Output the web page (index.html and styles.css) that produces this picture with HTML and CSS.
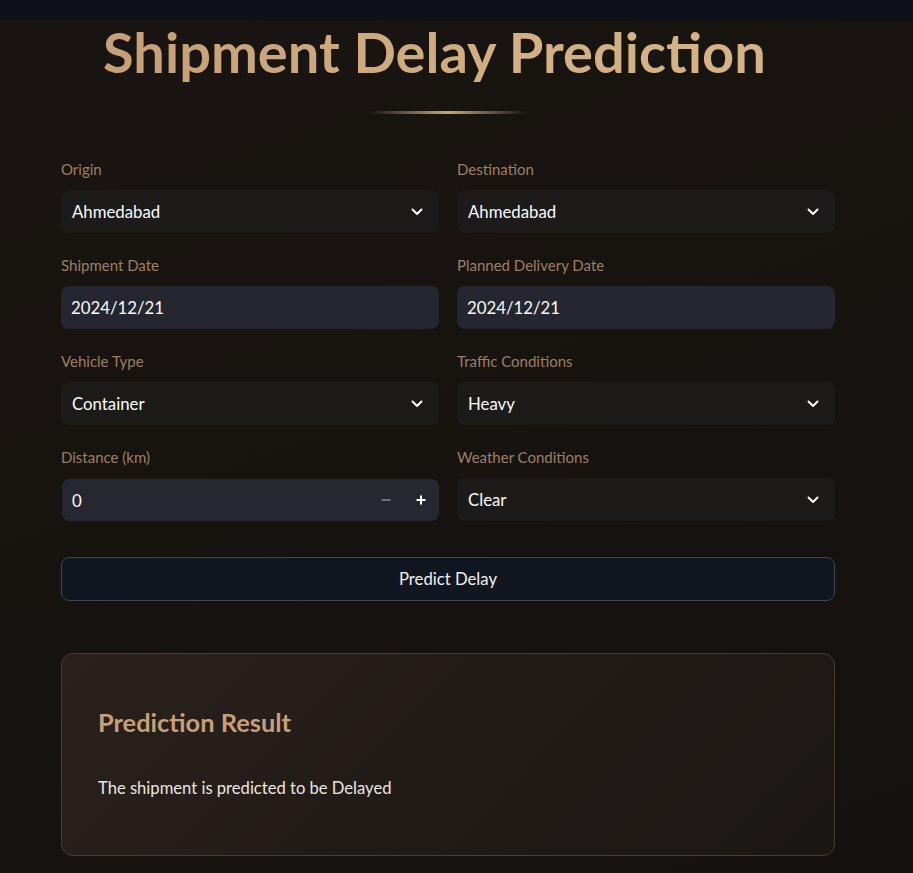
FILE: index.html
```html
<!DOCTYPE html>
<html lang="en">
<head>
<meta charset="utf-8">
<title>Shipment Delay Prediction</title>
<link rel="stylesheet" href="styles.css">
</head>
<body>
<header class="topbar"></header>
<main class="container">
  <h1 class="title">Shipment Delay Prediction</h1>
  <div class="divider"></div>

  <form class="form-grid">
    <div class="field">
      <label class="label">Origin</label>
      <div class="control select"><span>Ahmedabad</span>
        <svg class="chev" viewBox="0 0 12 8" width="12" height="8"><path d="M1.5 1.5 6 6l4.5-4.5" fill="none" stroke="#fff" stroke-width="2" stroke-linecap="round" stroke-linejoin="round"/></svg>
      </div>
    </div>
    <div class="field">
      <label class="label">Destination</label>
      <div class="control select"><span>Ahmedabad</span>
        <svg class="chev" viewBox="0 0 12 8" width="12" height="8"><path d="M1.5 1.5 6 6l4.5-4.5" fill="none" stroke="#fff" stroke-width="2" stroke-linecap="round" stroke-linejoin="round"/></svg>
      </div>
    </div>
    <div class="field">
      <label class="label">Shipment Date</label>
      <div class="control input"><span>2024/12/21</span></div>
    </div>
    <div class="field">
      <label class="label">Planned Delivery Date</label>
      <div class="control input"><span>2024/12/21</span></div>
    </div>
    <div class="field">
      <label class="label">Vehicle Type</label>
      <div class="control select"><span>Container</span>
        <svg class="chev" viewBox="0 0 12 8" width="12" height="8"><path d="M1.5 1.5 6 6l4.5-4.5" fill="none" stroke="#fff" stroke-width="2" stroke-linecap="round" stroke-linejoin="round"/></svg>
      </div>
    </div>
    <div class="field">
      <label class="label">Traffic Conditions</label>
      <div class="control select"><span>Heavy</span>
        <svg class="chev" viewBox="0 0 12 8" width="12" height="8"><path d="M1.5 1.5 6 6l4.5-4.5" fill="none" stroke="#fff" stroke-width="2" stroke-linecap="round" stroke-linejoin="round"/></svg>
      </div>
    </div>
    <div class="field">
      <label class="label">Distance (km)</label>
      <div class="control number"><span class="num-val">0</span>
        <span class="steppers">
          <svg class="step minus" viewBox="0 0 12 12" width="12" height="12"><path d="M1.5 6h9" stroke="#6d6e78" stroke-width="2"/></svg>
          <svg class="step plus" viewBox="0 0 12 12" width="12" height="12"><path d="M1.5 6h9M6 1.5v9" stroke="#fff" stroke-width="2"/></svg>
        </span>
      </div>
    </div>
    <div class="field">
      <label class="label">Weather Conditions</label>
      <div class="control select"><span>Clear</span>
        <svg class="chev" viewBox="0 0 12 8" width="12" height="8"><path d="M1.5 1.5 6 6l4.5-4.5" fill="none" stroke="#fff" stroke-width="2" stroke-linecap="round" stroke-linejoin="round"/></svg>
      </div>
    </div>
  </form>

  <button class="predict" type="button">Predict Delay</button>

  <section class="result">
    <h3 class="result-title">Prediction Result</h3>
    <p class="result-text">The shipment is predicted to be Delayed</p>
  </section>
</main>
</body>
</html>
```

FILE: styles.css
```css
* { box-sizing: border-box; }
html, body { margin: 0; padding: 0; }
body {
  min-height: 873px;
  font-family: "Lato", "Liberation Sans", sans-serif;
  color: #fafafa;
  background: linear-gradient(160deg, #1a1512 0%, #17130f 50%, #141110 100%);
  overflow: hidden;
}
.topbar {
  height: 21px;
  background: #0e1118;
}
.container {
  width: 774px;
  margin-left: 61px;
}
.title {
  margin: 0;
  padding-left: 42px;
  font-size: 56px;
  line-height: 60px;
  font-weight: 700;
  letter-spacing: 0;
  background: linear-gradient(90deg, #c49e76 0%, #d2b083 60%, #d4b387 100%);
  -webkit-background-clip: text;
  background-clip: text;
  color: transparent;
  margin-top: 1px;
}
.divider {
  width: 158px;
  height: 3px;
  margin: 29px auto 0;
  background: linear-gradient(90deg, rgba(201,165,122,0) 0%, #c9a57a 50%, rgba(201,165,122,0) 100%);
  border-radius: 2px;
}
.form-grid {
  display: grid;
  grid-template-columns: 1fr 1fr;
  column-gap: 18px;
  row-gap: 21px;
  margin-top: 44px;
}
.field { display: flex; flex-direction: column; }
.label {
  font-size: 15px;
  line-height: 22px;
  color: #9e7f64;
  margin-bottom: 10px;
}
.control {
  height: 43px;
  border-radius: 8px;
  display: flex;
  align-items: center;
  font-size: 16.8px;
  color: #fafafa;
}
.select {
  background: #1c1b1a;
  padding: 0 16px 0 11px;
  justify-content: space-between;
}
.chev { display: block; }
.input {
  background: #262631;
  padding: 0 10px;
}
.number {
  background: #262730;
  padding: 0 12px 0 10px;
  justify-content: space-between;
  height: 42px;
  margin-top: 1px;
  margin-left: 1px;
}
.steppers { display: flex; align-items: center; gap: 23px; }
.step { display: block; }
.predict {
  display: block;
  width: 100%;
  height: 44px;
  margin-top: 36px;
  background: #121620;
  border: 1px solid #414452;
  border-radius: 8px;
  color: #f0f0f0;
  font-family: inherit;
  font-size: 16.7px;
}
.result {
  margin-top: 52px;
  height: 203px;
  border: 1px solid #4a3c2f;
  border-radius: 12px;
  background: linear-gradient(135deg, #2a211c 0%, #221c18 45%, #1b1714 100%);
  padding: 52px 36px 0;
}
.result-title {
  margin: 0;
  font-size: 25.4px;
  line-height: 32px;
  font-weight: 700;
  color: #c99f78;
}
.result-text {
  margin: 39px 0 0;
  font-size: 16.6px;
  line-height: 22px;
  color: #ece6e0;
}
```
